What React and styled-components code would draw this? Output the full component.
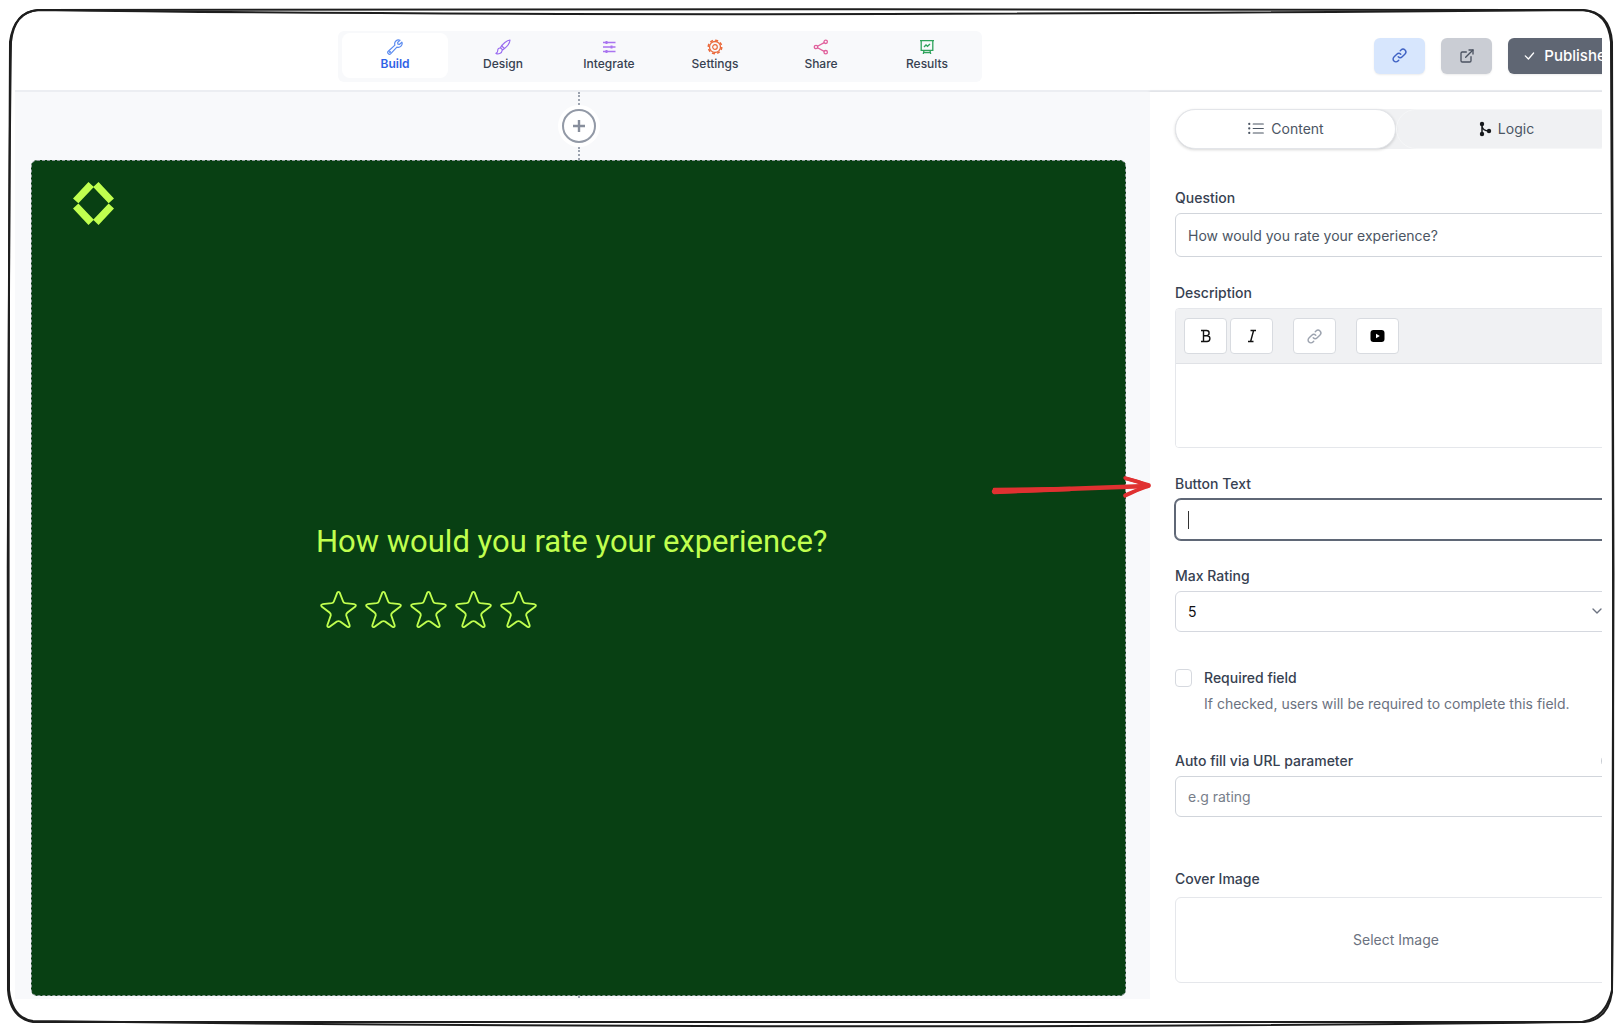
import React from "react";
import styled, { createGlobalStyle } from "styled-components";
import { BsListUl, BsCheckLg } from "react-icons/bs";
import { HiOutlineLink } from "react-icons/hi";
import { FiExternalLink, FiChevronDown } from "react-icons/fi";

const GlobalStyle = createGlobalStyle`
  * {
    box-sizing: border-box;
  }
  body {
    margin: 0;
    background: #ffffff;
    color: #374151;
    font-family: Inter, "Liberation Sans", sans-serif;
    font-size: 14px;
    line-height: 20px;
  }
  button, input, select {
    font: inherit;
    color: inherit;
    margin: 0;
  }
  h2, p {
    margin: 0;
  }
  svg {
    display: block;
    flex-shrink: 0;
  }
`;

const Page = styled.div`
  position: relative;
  display: flex;
  height: 100vh;
  min-height: 1032px;
  padding: 20px 20px 33px 15px;
`;

// clips the editor where it runs past the frame
const Viewport = styled.div`
  flex: 1;
  min-width: 0;
  display: flex;
  overflow: hidden;
`;

const Editor = styled.div`
  flex: 0 0 calc(100% + 40px);
  display: flex;
  flex-direction: column;
`;

const Frame = styled.svg`
  position: absolute;
  inset: 0;
  width: 100%;
  height: 100%;
  pointer-events: none;
`;

/* ---------- header ---------- */

const Header = styled.header`
  display: flex;
  align-items: center;
  justify-content: space-between;
  height: 72px;
  padding: 3px 13px 0 323px;
  border-bottom: 2px solid #eceef2;
`;

const Nav = styled.nav`
  display: flex;
  padding: 2px 2px 4px 4px;
  border-radius: 6px;
  background: #f8f9fb;
`;

const NavTab = styled.button`
  display: flex;
  flex-direction: column;
  align-items: center;
  width: 106px;
  height: 45px;
  padding: 6px 0 0;
  border: none;
  border-radius: 8px;
  background: ${(props) => (props.$active ? "#ffffff" : "transparent")};
  color: ${(props) => (props.$active ? "#2f62e6" : "#374151")};
  font-size: 12px;
  font-weight: ${(props) => (props.$active ? 600 : 500)};
  line-height: 18px;
  cursor: pointer;

  &:first-child {
    margin-right: 2px;
  }
  svg {
    color: ${(props) => props.$tint};
  }
`;

const Actions = styled.div`
  display: flex;
  gap: 16px;
  margin-bottom: 2px;
`;

const ActionButton = styled.button`
  display: flex;
  align-items: center;
  justify-content: center;
  gap: 8px;
  min-width: 51px;
  height: 36px;
  padding: 0 14px;
  border: none;
  border-radius: 6px;
  background: ${(props) => props.$bg};
  color: ${(props) => props.$color};
  font-size: 15px;
  font-weight: 500;
  box-shadow: 0 1px 2px rgba(0, 0, 0, 0.08);
  cursor: pointer;
`;

/* ---------- canvas ---------- */

const Body = styled.div`
  flex: 1;
  min-height: 0;
  display: flex;
`;

const Canvas = styled.main`
  position: relative;
  flex: 1;
  min-width: 0;
  display: flex;
  flex-direction: column;
  padding: 0 24px 0 16px;
  background: #f8f9fb;
`;

const Connector = styled.div`
  display: flex;
  flex-direction: column;
  align-items: center;
  height: ${(props) => props.$height};
`;

const DottedLine = styled.div`
  flex: 1;
  border-left: 2px dotted #9ca3af;
`;

const AddButton = styled.button`
  display: flex;
  align-items: center;
  justify-content: center;
  width: 34px;
  height: 34px;
  margin: 4px;
  padding: 0;
  border: 2px solid #9299a6;
  border-radius: 50%;
  background: #ffffff;
  color: #878e9c;
  box-shadow: 0 0 0 4px #ffffff;
  cursor: pointer;
`;

const QuestionCard = styled.section`
  flex: 1;
  display: flex;
  flex-direction: column;
  border: 1px dashed #8f9a9c;
  border-radius: 6px;
  background: #084013;
  color: #c0ff4f;
`;

const CardTop = styled.div`
  height: 66px;
  padding: 21px 41px 0;
`;

const CardCenter = styled.div`
  flex: 1;
  display: flex;
  flex-direction: column;
  justify-content: center;
  gap: 28px;
  width: 525px;
  margin: 0 auto;
  padding-bottom: 66px;
`;

const CardTitle = styled.h2`
  font-family: Roboto, Inter, sans-serif;
  font-size: 31px;
  font-weight: 400;
  line-height: 36px;
  white-space: nowrap;
`;

const Stars = styled.div`
  display: flex;
`;

const StarButton = styled.button`
  display: flex;
  justify-content: center;
  width: 45px;
  padding: 2px 0;
  border: none;
  background: none;
  color: inherit;
  cursor: pointer;
`;

const Arrow = styled.svg`
  position: absolute;
  right: -2px;
  top: 381px;
  z-index: 2;
`;

/* ---------- side panel ---------- */

const Panel = styled.aside`
  flex: 0 0 492px;
  padding: 17px 25px 0;
  background: #ffffff;
  box-shadow: -1px 0 3px rgba(0, 0, 0, 0.1);
`;

const Segmented = styled.div`
  display: flex;
  margin-bottom: 39px;
  border-radius: 20px;
  background: #f0f1f3;
`;

const Segment = styled.button`
  flex: 1;
  display: flex;
  align-items: center;
  justify-content: center;
  gap: 6px;
  height: 40px;
  padding: 0;
  border: 1px solid ${(props) => (props.$active ? "#e3e5e9" : "#f6f7f8")};
  border-radius: 20px;
  background: ${(props) => (props.$active ? "#ffffff" : "transparent")};
  box-shadow: ${(props) => (props.$active ? "0 1px 3px rgba(0, 0, 0, 0.16)" : "none")};
  color: #4b5563;
  font-size: 14px;
  cursor: pointer;
`;

const Field = styled.div`
  display: flex;
  flex-direction: column;
  gap: ${(props) => props.$gap || "5px"};
  margin-bottom: ${(props) => props.$space || "26px"};
`;

const Label = styled.label`
  color: #374151;
  font-size: 14px;
  font-weight: 500;
`;

const InputWrap = styled.div`
  position: relative;
`;

const TextInput = styled.input`
  display: block;
  width: 100%;
  height: ${(props) => (props.$tall ? "44px" : "41px")};
  padding: 0 12px;
  border: 1px solid ${(props) => (props.$focused ? "#5f6776" : "#d1d5db")};
  border-radius: 6px;
  background: #ffffff;
  box-shadow: ${(props) => (props.$focused ? "0 0 0 1px #5f6776" : "none")};
  color: #4b5563;
  font-size: 14px;
  outline: none;

  &::placeholder {
    color: #777e8a;
    opacity: 1;
  }
`;

const Caret = styled.span`
  position: absolute;
  left: 13px;
  top: 12px;
  width: 1px;
  height: 18px;
  background: #333333;
  pointer-events: none;
`;

const RichText = styled.div`
  display: flex;
  flex-direction: column;
  height: 140px;
  border: 1px solid #e5e7eb;
  border-radius: 4px;
  overflow: hidden;
`;

const Toolbar = styled.div`
  display: flex;
  padding: 9px 8px;
  border-bottom: 1px solid #e0e2e6;
  background: #f0f1f3;
`;

const ToolButton = styled.button`
  display: flex;
  align-items: center;
  justify-content: center;
  width: 43px;
  height: 36px;
  margin-right: ${(props) => (props.$last ? "20px" : "3px")};
  padding: 0;
  border: 1px solid #d8dbe0;
  border-radius: 4px;
  background: #ffffff;
  color: ${(props) => props.$color || "#111111"};
  cursor: pointer;
`;

const RichTextArea = styled.textarea`
  flex: 1;
  width: 100%;
  padding: 12px;
  border: none;
  outline: none;
  resize: none;
  background: #ffffff;
`;

const SelectWrap = styled.div`
  position: relative;

  svg {
    position: absolute;
    right: 12px;
    top: 12px;
    color: #6b7280;
    pointer-events: none;
  }
`;

const Select = styled.select`
  display: block;
  appearance: none;
  width: 100%;
  height: 41px;
  padding: 0 12px;
  border: 1px solid #d5d8df;
  border-radius: 6px;
  background: #ffffff;
  color: #111111;
  font-size: 14px;
`;

const CheckRow = styled.div`
  display: grid;
  grid-template-columns: 17px 1fr;
  column-gap: 12px;
  row-gap: 6px;
  align-items: center;
  margin: 36px 0 37px;
`;

const Checkbox = styled.input`
  appearance: none;
  width: 17px;
  height: 18px;
  margin: 0;
  border: 1px solid #d6d9df;
  border-radius: 4px;
  background: #ffffff;
`;

const Hint = styled.p`
  grid-column: 2;
  color: #6b7280;
  font-size: 14px;
  white-space: nowrap;
`;

const LabelRow = styled.div`
  display: flex;
  align-items: center;
  justify-content: space-between;
`;

const Toggle = styled.input`
  appearance: none;
  width: 16px;
  height: 16px;
  margin: 0;
  border: 1px solid #c5c9d0;
  border-radius: 50%;
`;

const ImagePicker = styled.button`
  width: 100%;
  height: 86px;
  border: 1px solid #e5e7eb;
  border-radius: 6px;
  background: #ffffff;
  color: #6b7280;
  font-size: 14px;
  cursor: pointer;
`;

/* ---------- icons ---------- */

const WrenchIcon = () => (
  <svg width="16" height="16" viewBox="0 0 16 16" fill="none" stroke="currentColor" strokeWidth="1.200" strokeLinejoin="round">
    <path d="M13 1.200A3.900 3.900 0 0 0 7.900 6.100L1.300 12.200A1.700 1.700 0 0 0 3.800 14.700L9.900 8.100A3.900 3.900 0 0 0 14.900 3.100L12.600 5.300L10.900 5.100L10.700 3.400Z" />
    <circle cx="3" cy="13" r=".5" />
  </svg>
);

const BrushIcon = () => (
  <svg width="16" height="16" viewBox="0 0 16 16" fill="none" stroke="currentColor" strokeWidth="1.200" strokeLinejoin="round" strokeLinecap="round">
    <path d="M15 1C12 1.200 7.500 4.800 5.400 8.700L7.600 10.900C11.500 8.300 14.900 4.500 15 1Z" />
    <path d="M5.400 9C3.600 8.800 2.600 10.200 2.700 11.800C2.700 13.200 2 13.900 1 14.400C3 15.400 6.900 14.800 7.200 11.200" />
    <path d="M7 7.200L9.200 9.200" />
  </svg>
);

const SlidersIcon = () => (
  <svg width="16" height="16" viewBox="0 0 16 16" fill="none" stroke="currentColor" strokeWidth="1.400">
    <path d="M2 3.500h12.500M2 8h12.500M2 12.500h12.500" />
    <path d="M5.500 2v3M10.500 6.500v3M5.500 11v3" strokeWidth="2" />
  </svg>
);

const GearIcon = () => (
  <svg width="16" height="16" viewBox="0 0 16 16" fill="none" stroke="currentColor">
    <circle cx="8" cy="8" r="6.700" strokeWidth="1.600" strokeDasharray="3 2.262" />
    <circle cx="8" cy="8" r="5.500" strokeWidth="1.300" />
    <circle cx="8" cy="8" r="2.300" strokeWidth="1.200" />
  </svg>
);

const ShareIcon = () => (
  <svg width="16" height="16" viewBox="0 0 16 16" fill="none" stroke="currentColor" strokeWidth="1.300">
    <circle cx="3" cy="8" r="1.700" />
    <circle cx="12.700" cy="2.800" r="1.700" />
    <circle cx="12.700" cy="13.200" r="1.700" />
    <path d="M4.500 7.200L11.200 3.600M4.500 8.800L11.200 12.400" />
  </svg>
);

const EaselIcon = () => (
  <svg width="16" height="16" viewBox="0 0 16 16" fill="none" stroke="currentColor" strokeWidth="1.300">
    <path d="M1 1.600h14M2.200 1.600v9.800h11.600V1.600" />
    <path d="M5 8l2-2 1.500 1.300L11 5M5 11.400L4.300 15M11 11.400l.7 3.600M4.600 13.500h6.800" />
  </svg>
);

const BranchIcon = () => (
  <svg width="13" height="16" viewBox="0 0 13 16" fill="#16181c">
    <circle cx="3" cy="3" r="2.200" />
    <circle cx="3" cy="13" r="2.200" />
    <circle cx="10" cy="10" r="2.200" />
    <path d="M3 3v10M3 5c.5 3.500 3 5 7 5" fill="none" stroke="#16181c" strokeWidth="1.500" />
  </svg>
);

const BoldIcon = () => (
  <svg width="12" height="14" viewBox="0 0 12 14" fill="none" stroke="currentColor" strokeWidth="1.400">
    <path d="M1 1.500H6.500A2.600 2.600 0 0 1 6.500 6.700H4M6.500 6.700H7A2.900 2.900 0 0 1 7 12.500H1M3.500 1.500V12.500" />
  </svg>
);

const ItalicIcon = () => (
  <svg width="12" height="14" viewBox="0 0 12 14" fill="none" stroke="currentColor" strokeWidth="1.400">
    <path d="M4.500 1.500H10M2 12.500H7.500M7.600 1.500L4.600 12.500" />
  </svg>
);

const VideoIcon = () => (
  <svg width="15" height="14" viewBox="0 0 15 14">
    <rect x="0.500" y="1" width="14" height="12" rx="3" fill="#000000" />
    <path d="M6 4.800L9.800 7L6 9.200Z" fill="#ffffff" />
  </svg>
);

const PlusIcon = () => (
  <svg width="14" height="14" viewBox="0 0 14 14" stroke="currentColor" strokeWidth="2.400">
    <path d="M1 7h12M7 1v12" />
  </svg>
);

const Logo = () => (
  <svg width="41" height="43" viewBox="218 547 122 128" fill="currentColor">
    <path d="M264 547l16 15-46 48-16-14zM294 547l46 49-16 14-46-48zM234 611l46 48-16 16-46-49zM324 611l16 15-46 49-16-16z" />
  </svg>
);

const StarIcon = () => (
  <svg width="39" height="40" viewBox="0 0 36 40" preserveAspectRatio="none" fill="none" stroke="currentColor" strokeWidth="1.700" strokeLinejoin="round">
    <path d="M16.900 2.600Q18 1.200 19.100 2.600L22.200 11.200Q22.600 12.900 24.300 13.200L32.700 14.200Q34.800 14.800 33.600 16.500L26.300 22.500Q24.900 23.700 25.100 25.300L28.300 35.300Q28.500 37.800 26.500 37L19.500 31.500Q18 30.600 16.500 31.500L9.500 37Q7.500 37.800 7.700 35.300L10.900 25.300Q11.100 23.700 9.700 22.500L2.400 16.500Q1.200 14.800 3.300 14.200L11.700 13.200Q13.400 12.900 13.800 11.200Z" />
  </svg>
);

const tabs = [
  { name: "Build", icon: <WrenchIcon />, tint: "#5b8bf0", active: true },
  { name: "Design", icon: <BrushIcon />, tint: "#9a6cf0" },
  { name: "Integrate", icon: <SlidersIcon />, tint: "#a974f0" },
  { name: "Settings", icon: <GearIcon />, tint: "#ea6a3c" },
  { name: "Share", icon: <ShareIcon />, tint: "#e0609c" },
  { name: "Results", icon: <EaselIcon />, tint: "#2fa35c" },
];

const App = () => {
  return (
    <Page>
      <GlobalStyle />
      <Viewport>
        <Editor>
          <Header>
            <Nav>
              {tabs.map((tab) => (
                <NavTab key={tab.name} $active={tab.active} $tint={tab.tint}>
                  {tab.icon}
                  {tab.name}
                </NavTab>
              ))}
            </Nav>
            <Actions>
              <ActionButton $bg="#d7e6fd" $color="#3f62c4" aria-label="Copy link">
                <HiOutlineLink size={17} />
              </ActionButton>
              <ActionButton $bg="#cacdd4" $color="#4b5260" aria-label="Open form">
                <FiExternalLink size={16} />
              </ActionButton>
              <ActionButton $bg="#5f6673" $color="#ffffff">
                <BsCheckLg size={14} />
                Published
              </ActionButton>
            </Actions>
          </Header>

          <Body>
            <Canvas>
              <Connector $height="68px">
                <DottedLine />
                <AddButton aria-label="Add question">
                  <PlusIcon />
                </AddButton>
                <DottedLine />
              </Connector>
              <QuestionCard>
                <CardTop>
                  <Logo />
                </CardTop>
                <CardCenter>
                  <CardTitle>How would you rate your experience?</CardTitle>
                  <Stars>
                    {[1, 2, 3, 4, 5].map((value) => (
                      <StarButton key={value} aria-label={`Rate ${value}`}>
                        <StarIcon />
                      </StarButton>
                    ))}
                  </Stars>
                </CardCenter>
              </QuestionCard>
              <Connector $height="3px">
                <DottedLine />
              </Connector>
              <Arrow width="162" height="28" viewBox="0 0 162 28" fill="none" stroke="#e03131" strokeLinecap="round" strokeLinejoin="round">
                <path d="M4 18.500L158 13" strokeWidth="4.500" />
                <path d="M4 16L80 15L80 17L4 20Z" strokeWidth="2.400" fill="#e03131" />
                <path d="M135 5Q148 8 159 13Q147 17 135 23" strokeWidth="3.400" />
                <path d="M136 5.500L159 12L135 22" strokeWidth="3.400" />
              </Arrow>
            </Canvas>

            <Panel>
              <Segmented>
                <Segment $active>
                  <BsListUl size={18} />
                  Content
                </Segment>
                <Segment>
                  <BranchIcon />
                  Logic
                </Segment>
              </Segmented>

              <Field>
                <Label htmlFor="question">Question</Label>
                <TextInput id="question" $tall defaultValue="How would you rate your experience?" />
              </Field>

              <Field>
                <Label htmlFor="description">Description</Label>
                <RichText>
                  <Toolbar>
                    <ToolButton aria-label="Bold">
                      <BoldIcon />
                    </ToolButton>
                    <ToolButton $last aria-label="Italic">
                      <ItalicIcon />
                    </ToolButton>
                    <ToolButton $last $color="#9ca3af" aria-label="Insert link">
                      <HiOutlineLink size={17} />
                    </ToolButton>
                    <ToolButton $last aria-label="Insert video">
                      <VideoIcon />
                    </ToolButton>
                  </Toolbar>
                  <RichTextArea id="description" />
                </RichText>
              </Field>

              <Field>
                <Label htmlFor="button-text">Button Text</Label>
                <InputWrap>
                  <TextInput id="button-text" $focused />
                  <Caret />
                </InputWrap>
              </Field>

              <Field>
                <Label htmlFor="max-rating">Max Rating</Label>
                <SelectWrap>
                  <Select id="max-rating" defaultValue="5">
                    <option>5</option>
                  </Select>
                  <FiChevronDown size={16} />
                </SelectWrap>
              </Field>

              <CheckRow>
                <Checkbox type="checkbox" id="required" />
                <Label htmlFor="required">Required field</Label>
                <Hint>If checked, users will be required to complete this field.</Hint>
              </CheckRow>

              <Field $space="52px">
                <LabelRow>
                  <Label htmlFor="auto-fill">Auto fill via URL parameter</Label>
                  <Toggle type="checkbox" aria-label="Enable auto fill" />
                </LabelRow>
                <TextInput id="auto-fill" placeholder="e.g rating" />
              </Field>

              <Field $gap="8px">
                <Label htmlFor="cover">Cover Image</Label>
                <ImagePicker id="cover">Select Image</ImagePicker>
              </Field>
            </Panel>
          </Body>
        </Editor>
      </Viewport>

      {/* hand drawn outline, two loose passes */}
      <Frame viewBox="0 0 1622 1032" preserveAspectRatio="none" fill="none" stroke="#1e1e1e" strokeWidth="2">
        <path d="M38 10C500 9 1100 9 1583 10Q1610 12 1612 42C1614 300 1614 700 1612 992Q1608 1020 1584 1022C1100 1024 500 1020 33 1022Q10 1018 8 990C7 700 8 300 10 42Q14 12 38 10Z" />
        <path d="M38 10C400 15 900 16 1583 10Q1608 12 1611 42C1612 300 1615 700 1612 990Q1606 1018 1582 1022C1100 1028 600 1028 33 1021Q12 1018 9 990C9 700 7 300 11 42Q14 12 38 10Z" />
      </Frame>
    </Page>
  );
};

export default App;
